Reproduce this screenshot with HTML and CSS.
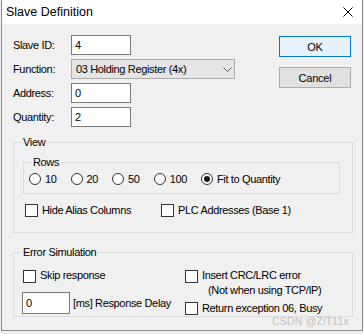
FILE: index.html
```html
<!DOCTYPE html>
<html>
<head>
<meta charset="utf-8">
<link rel="stylesheet" href="styles.css">
</head>
<body>
<div class="win">
  <div class="titlebar">
    <span class="title">Slave Definition</span>
    <svg class="close" width="10" height="10" viewBox="0 0 10 10"><path d="M0.5 0.5 L9.5 9.5 M9.5 0.5 L0.5 9.5" stroke="#000" stroke-width="1" fill="none"/></svg>
  </div>
  <div class="content">
    <div class="top">
      <div class="form">
        <span class="lbl">Slave ID:</span>
        <div class="input">4</div>
        <span class="lbl">Function:</span>
        <div class="select"><span>03 Holding Register (4x)</span>
          <svg class="chev" width="9" height="5" viewBox="0 0 9 5"><path d="M0.5 0.5 L4.5 4.5 L8.5 0.5" stroke="#606060" stroke-width="1" fill="none"/></svg>
        </div>
        <span class="lbl">Address:</span>
        <div class="input">0</div>
        <span class="lbl">Quantity:</span>
        <div class="input">2</div>
      </div>
      <div class="buttons">
        <div class="btn default">OK</div>
        <div class="btn">Cancel</div>
      </div>
    </div>

    <div class="group view">
      <span class="legend">View</span>
      <div class="group rows">
        <span class="legend">Rows</span>
        <div class="radios">
          <label class="opt"><span class="rb"></span><span>10</span></label>
          <label class="opt"><span class="rb"></span><span>20</span></label>
          <label class="opt"><span class="rb"></span><span>50</span></label>
          <label class="opt"><span class="rb"></span><span>100</span></label>
          <label class="opt"><span class="rb on"></span><span>Fit to Quantity</span></label>
        </div>
      </div>
      <div class="checks">
        <label class="chk first"><span class="cb"></span><span>Hide Alias Columns</span></label>
        <label class="chk"><span class="cb"></span><span>PLC Addresses (Base 1)</span></label>
      </div>
    </div>

    <div class="group err">
      <span class="legend">Error Simulation</span>
      <div class="errcols">
        <div class="col">
          <label class="chk top-align"><span class="cb"></span><span class="txt">Skip response</span></label>
          <div class="delay">
            <div class="input small">0</div>
            <span>[ms] Response Delay</span>
          </div>
        </div>
        <div class="col">
          <label class="chk top-align"><span class="cb"></span><span class="txt">Insert CRC/LRC error<br><span class="indent">(Not when using TCP/IP)</span></span></label>
          <label class="chk ret"><span class="cb"></span><span>Return exception 06, Busy</span></label>
        </div>
      </div>
    </div>
  </div>
  <div class="watermark">CSDN @ZiT11x</div>
</div>
</body>
</html>
```
FILE: styles.css
```css
* { box-sizing: border-box; }
body {
  margin: 0;
  background: #f0f0f0;
  font-family: "Liberation Sans", Arial, sans-serif;
  font-size: 11px;
  letter-spacing: -0.35px;
  color: #000;
}
.win {
  margin-left: 1px;
  width: 362px;
  height: 331px;
  border: 1px solid #8c8c8c;
  border-top: none;
  background: #f0f0f0;
  position: relative;
}
.titlebar {
  height: 24px;
  background: #fff;
  display: flex;
  align-items: center;
  padding-left: 4px;
  padding-bottom: 1px;
}
.title {
  font-size: 12.5px;
  letter-spacing: 0;
}
.close {
  margin-left: auto;
  margin-right: 9px;
  margin-top: 1px;
}
.content {
  padding: 11px 9px 0 11px;
}
.top {
  display: flex;
  justify-content: space-between;
}
.form {
  display: grid;
  grid-template-columns: 58px auto;
  grid-auto-rows: 20px;
  row-gap: 4px;
  align-items: center;
}
.lbl { line-height: 13px; }
.input {
  width: 60px;
  height: 20px;
  border: 1px solid #7a7a7a;
  background: #fff;
  padding-left: 3px;
  line-height: 18px;
}
.select {
  width: 164px;
  height: 20px;
  border: 1px solid #acacac;
  background: #e5e5e5;
  padding-left: 4px;
  display: flex;
  align-items: center;
  justify-content: space-between;
}
.chev { margin-right: 2px; margin-top: 1px; }
.buttons {
  display: flex;
  flex-direction: column;
  gap: 10px;
  margin-top: 1px;
  margin-right: 2px;
}
.btn {
  width: 72px;
  height: 21px;
  border: 1px solid #adadad;
  background: #e1e1e1;
  display: flex;
  align-items: center;
  justify-content: center;
  letter-spacing: -0.2px;
}
.btn.default {
  border-color: #0078d7;
  background: #e5f1fb;
}
.group {
  border: 1px solid #dcdcdc;
  position: relative;
}
.legend {
  position: absolute;
  top: -7px;
  left: 8px;
  padding: 0 1px;
  background: #f0f0f0;
  line-height: 13px;
}
.view {
  margin-top: 15px;
  height: 91px;
  padding: 19px 12px 0 9px;
}
.rows {
  height: 32px;
  padding: 10px 0 0 5px;
}
.radios {
  display: flex;
  gap: 14px;
  align-items: center;
}
.opt {
  display: flex;
  align-items: center;
  gap: 4px;
  line-height: 12px;
}
.rb {
  width: 12px;
  height: 12px;
  border: 1px solid #333;
  border-radius: 50%;
  background: #fff;
  display: flex;
  align-items: center;
  justify-content: center;
}
.rb.on::after {
  content: "";
  width: 6px;
  height: 6px;
  border-radius: 50%;
  background: #1a1a1a;
}
.checks {
  display: flex;
  margin-top: 10px;
  padding-left: 2px;
}
.chk {
  display: flex;
  align-items: center;
  gap: 4px;
  line-height: 13px;
}
.chk.first { width: 136px; }
.cb {
  flex: none;
  width: 13px;
  height: 13px;
  border: 1px solid #333;
  background: #fff;
}
.err {
  margin-top: 19px;
  height: 65px;
  padding: 15px 0 0 9px;
}
.errcols {
  display: grid;
  grid-template-columns: 162px auto;
}
.chk.top-align {
  align-items: flex-start;
}
.chk.top-align .cb { margin-top: 2px; }
.chk.top-align .txt { line-height: 15px; }
.indent { padding-left: 6px; }
.delay {
  display: flex;
  align-items: center;
  gap: 3px;
  margin-top: 9px;
  margin-left: -1px;
}
.input.small {
  width: 48px;
  height: 22px;
  line-height: 20px;
}
.chk.ret { margin-top: 4px; }
.watermark {
  position: absolute;
  left: 270px;
  top: 318px;
  font-size: 10.5px;
  line-height: 7px;
  letter-spacing: 0.2px;
  color: #c2c2c2;
}
```
